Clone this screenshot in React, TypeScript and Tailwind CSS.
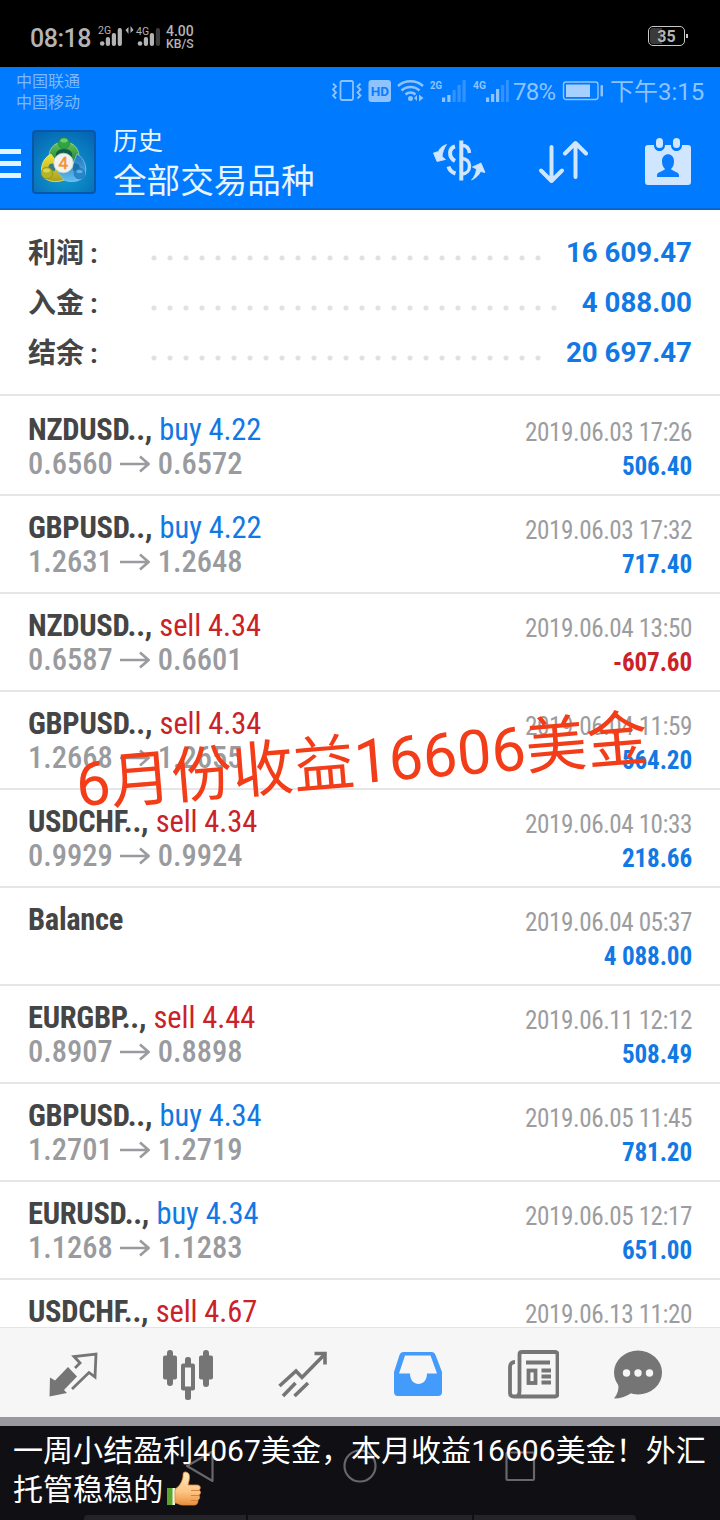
import React from 'react';

type Side = 'buy' | 'sell';

interface Deal {
  symbol: string;
  side?: Side;
  volume?: string;
  open?: string;
  close?: string;
  time: string;
  profit: string;
}

const SUMMARY = [
  { label: '利润', value: '16 609.47', dots: 'w-[400px]' },
  { label: '入金', value: '4 088.00', dots: 'w-[416px]' },
  { label: '结余', value: '20 697.47', dots: 'w-[400px]' },
];

const DEALS: Deal[] = [
  { symbol: 'NZDUSD..,', side: 'buy', volume: '4.22', open: '0.6560', close: '0.6572', time: '2019.06.03 17:26', profit: '506.40' },
  { symbol: 'GBPUSD..,', side: 'buy', volume: '4.22', open: '1.2631', close: '1.2648', time: '2019.06.03 17:32', profit: '717.40' },
  { symbol: 'NZDUSD..,', side: 'sell', volume: '4.34', open: '0.6587', close: '0.6601', time: '2019.06.04 13:50', profit: '-607.60' },
  { symbol: 'GBPUSD..,', side: 'sell', volume: '4.34', open: '1.2668', close: '1.2655', time: '2019.06.04 11:59', profit: '564.20' },
  { symbol: 'USDCHF..,', side: 'sell', volume: '4.34', open: '0.9929', close: '0.9924', time: '2019.06.04 10:33', profit: '218.66' },
  { symbol: 'Balance', time: '2019.06.04 05:37', profit: '4 088.00' },
  { symbol: 'EURGBP..,', side: 'sell', volume: '4.44', open: '0.8907', close: '0.8898', time: '2019.06.11 12:12', profit: '508.49' },
  { symbol: 'GBPUSD..,', side: 'buy', volume: '4.34', open: '1.2701', close: '1.2719', time: '2019.06.05 11:45', profit: '781.20' },
  { symbol: 'EURUSD..,', side: 'buy', volume: '4.34', open: '1.1268', close: '1.1283', time: '2019.06.05 12:17', profit: '651.00' },
  { symbol: 'USDCHF..,', side: 'sell', volume: '4.67', time: '2019.06.13 11:20', profit: '' },
];

const PhoneStatusBar = () => (
  <div className="h-[67px] shrink-0 bg-black text-[#b4b4b4] flex items-start pl-[30px] pr-[32px]">
    <span className="text-[25px] leading-none mt-[26px] w-[62px] whitespace-nowrap font-medium tracking-[-0.5px]">08:18</span>
    <svg width="66" height="24" viewBox="0 0 66 24" className="mt-[24px] ml-[5px]" fill="#b4b4b4">
      <text x="1" y="10" fontSize="10.5">2G</text>
      <circle cx="5.2" cy="19.5" r="2.3" />
      <rect x="8.8" y="13" width="4.2" height="9" rx="2" />
      <rect x="14.8" y="9" width="4.2" height="13" rx="2" />
      <rect x="20.7" y="4" width="4.2" height="18" rx="2" />
      <path d="M28.5 6l3-3v7zM36.5 6l-3-4v7z" />
      <text x="39" y="11" fontSize="10.5">4G</text>
      <circle cx="43" cy="19.5" r="2.3" />
      <rect x="46.8" y="13" width="4.2" height="9" rx="2" />
      <rect x="52.8" y="9" width="4.2" height="13" rx="2" />
      <rect x="58.8" y="4" width="4.2" height="18" rx="2" fill="#3c3c3c" />
    </svg>
    <div className="mt-[25px] ml-[3px] font-medium">
      <div className="text-[14px] leading-[13px]">4.00</div>
      <div className="text-[12.2px] leading-[12px]">KB/S</div>
    </div>
    <div className="ml-auto mt-[26px] flex items-center">
      <div className="relative w-[37px] h-[20px] rounded-[5px] border border-[#c8c8c8] flex items-center justify-center">
        <div className="absolute left-px top-px w-[12px] h-[16px] rounded-l-[3px] bg-[#3a3a3a]" />
        <span className="relative top-px text-[16px] leading-none font-bold">35</span>
      </div>
      <div className="w-[2px] h-[4px] ml-px bg-[#c8c8c8]" />
    </div>
  </div>
);

const CarrierBar = () => (
  <div className="h-[50px] flex items-start pl-[16px] pr-[14px] text-[#8fc3ff]">
    <div className="text-[16px] leading-[21px] mt-[4px] text-[#7db8fb]">
      <div>中国联通</div>
      <div>中国移动</div>
    </div>
    <svg width="178" height="30" viewBox="0 0 178 30" className="ml-auto mt-[9px]" fill="#8fc3ff">
      <g fill="none" stroke="#8fc3ff" strokeWidth="1.8">
        <rect x="9.5" y="5" width="12.5" height="19" rx="1.5" />
        <path d="M2 7.5l3 3-3 3 3 3-3 3 3 3M29.5 7.5l-3 3 3 3-3 3 3 3-3 3" />
      </g>
      <rect x="37.5" y="4" width="22.5" height="22" rx="3" />
      <text x="48.8" y="19.8" fontSize="13.5" fontWeight="bold" textAnchor="middle" fill="#0a7cff">HD</text>
      <g fill="none" stroke="#8fc3ff" strokeWidth="2.5">
        <path d="M67 10a19 19 0 0 1 25 0M70.5 14.5a13 13 0 0 1 18 0M74.5 18.5a7.5 7.5 0 0 1 10 0" />
      </g>
      <circle cx="79.5" cy="22.5" r="2.5" />
      <path d="M88 18.5l4.5 3.5-4.5 3.5zM86 19v6l-3-3z" />
      <text x="99" y="12.5" fontSize="11.5" fontWeight="bold" textLength="12" lengthAdjust="spacingAndGlyphs">2G</text>
      <rect x="111" y="21.5" width="3.2" height="4.5" />
      <rect x="116.3" y="19" width="3.2" height="7" />
      <g opacity="0.35">
        <rect x="121.5" y="14" width="3.2" height="12" />
        <rect x="126.5" y="9" width="3.2" height="17" />
        <rect x="131.5" y="4" width="3.2" height="22" />
      </g>
      <text x="142" y="12.5" fontSize="11.5" fontWeight="bold" textLength="13" lengthAdjust="spacingAndGlyphs">4G</text>
      <rect x="155" y="21.5" width="3.2" height="4.5" />
      <rect x="160" y="18" width="3.2" height="8" />
      <rect x="165" y="13" width="3.2" height="13" />
      <g opacity="0.35">
        <rect x="170" y="9" width="3.2" height="17" />
        <rect x="175" y="4" width="2.8" height="22" />
      </g>
    </svg>
    <span className="text-[24px] leading-none mt-[13px] ml-[4px] w-[46px] whitespace-nowrap tracking-[-0.7px]">78%</span>
    <svg width="42" height="22" viewBox="0 0 42 22" className="mt-[13px] ml-[3px]">
      <rect x="1.5" y="2" width="34.5" height="17.5" rx="2.5" fill="none" stroke="#8fc3ff" strokeWidth="1.4" />
      <rect x="4" y="4.5" width="24" height="12.5" fill="#a5d0ff" />
      <rect x="38.5" y="5" width="2.5" height="11.5" rx="1" fill="#8fc3ff" />
    </svg>
    <span className="text-[24px] leading-[30px] mt-[10px] ml-[6px] w-[96px] whitespace-nowrap">下午3:15</span>
  </div>
);

const AppLogo = () => (
  <svg width="64" height="64" viewBox="0 0 64 64">
    <defs>
      <radialGradient id="tile" cx="50%" cy="65%" r="75%">
        <stop offset="0" stopColor="#12a0d0" />
        <stop offset="1" stopColor="#0465b4" />
      </radialGradient>
      <linearGradient id="green" x1="0" y1="0" x2="0" y2="1">
        <stop offset="0" stopColor="#6cc455" />
        <stop offset="1" stopColor="#167f35" />
      </linearGradient>
      <linearGradient id="gold" x1="0" y1="0" x2="0" y2="1">
        <stop offset="0" stopColor="#f3e238" />
        <stop offset="1" stopColor="#a8a01c" />
      </linearGradient>
      <linearGradient id="blue" x1="0" y1="0" x2="0" y2="1">
        <stop offset="0" stopColor="#1d74b8" />
        <stop offset="1" stopColor="#63bdf0" />
      </linearGradient>
    </defs>
    <rect x="1" y="1" width="62" height="62" rx="3" fill="url(#tile)" stroke="#0857a8" strokeWidth="2" />
    <path d="M17 30C16 19 22 12 32 12s16 7 15 18l-8 3H25z" fill="url(#green)" stroke="#a4dd8c" strokeWidth="0.8" />
    <path d="M19 24C11 28 8 37 10 45c4 7 14 8 22 5l-2-10z" fill="url(#gold)" stroke="#efe77a" strokeWidth="0.8" />
    <path d="M45 24c8 5 10 13 8 21-4 7-14 8-21 5l-7-9 14-3z" fill="url(#blue)" stroke="#7fc8f2" strokeWidth="0.8" />
    <path d="M24 27c-1-5 2-8 8-8s9 3 8 8z" fill="#0b5f4c" />
    <path d="M18 34c-2 2-2 4-1 6l6 1v-8zM46 34c2 2 2 4 1 6l-6 1v-8z" fill="#0d6a9c" opacity="0.8" />
    <circle cx="32" cy="13" r="5.8" fill="#2ea446" stroke="#1c7c3c" strokeWidth="0.6" />
    <ellipse cx="32" cy="10.5" rx="3.5" ry="2" fill="#8fda80" opacity="0.7" />
    <circle cx="15" cy="43" r="5.8" fill="#b3b428" stroke="#80861c" strokeWidth="0.6" />
    <ellipse cx="14.5" cy="40.5" rx="3.5" ry="2" fill="#e9e46e" opacity="0.7" />
    <circle cx="47.5" cy="43.5" r="5.3" fill="#2685cc" stroke="#1a69a8" strokeWidth="0.6" />
    <ellipse cx="47.5" cy="41.5" rx="3" ry="1.5" fill="#8fd0f5" opacity="0.6" />
    <circle cx="31.5" cy="33" r="9.8" fill="#f3f1ec" stroke="#c4d4cc" strokeWidth="0.8" />
    <text x="31.3" y="39" fontSize="17" textAnchor="middle" fill="#f09433" stroke="#f09433" strokeWidth="0.5">4</text>
  </svg>
);

const TitleBar = () => (
  <div className="h-[93px] flex items-start border-b-2 border-[#0868cf]">
    <div className="mt-[32px] w-[21px] flex flex-col gap-[7px]">
      <div className="h-[5px] bg-[#e4f2ff]" />
      <div className="h-[5px] bg-[#e4f2ff]" />
      <div className="h-[5px] bg-[#e4f2ff]" />
    </div>
    <div className="mt-[13px] ml-[11px]">
      <AppLogo />
    </div>
    <div className="ml-[17px] text-[#e8f4ff] whitespace-nowrap">
      <div className="text-[25px] leading-[30px] mt-[10px]">历史</div>
      <div className="text-[33.6px] leading-[42px] mt-[4px]">全部交易品种</div>
    </div>
    <svg width="54" height="44" viewBox="0 0 54 44" className="ml-auto mt-[22px] mr-[51px]">
      <g fill="none" stroke="#d0e6ff" strokeWidth="4">
        <path d="M22 7.5C16 9 15 18 22 22M15.5 27.5c1 4 4 6 7 7" />
        <path d="M28.3 1.5v40" />
        <path d="M29 6.5c4 0 7 2 7.5 7.5M29 19.500c4 0 7.500 3 7.500 7.500s-3 8-7.500 8" strokeWidth="3.500" />
      </g>
      <path d="M13.500 5.500C9 7 6.500 9.500 5.500 12.500L0.500 14 4 22.500l8.500-2L9 17.500c.5-4.500 2-8.500 4.500-12zM38.500 41c4.500-2 7.500-5 9-8.500l4.500 1-4-9.500-8.500 4 4 2c-.5 4-2 8-5 11z" fill="#d0e6ff" stroke="#d0e6ff" strokeWidth="0.800" strokeLinejoin="round" />
    </svg>
    <svg width="50" height="44" viewBox="0 0 50 44" className="mt-[23px] mr-[56px]" fill="none" stroke="#d0e6ff" strokeWidth="4" strokeLinecap="round" strokeLinejoin="round">
      <path d="M13.500 7v34M3 30.500L13.500 41 24 30.500" />
      <path d="M37.500 37V3M27 13.500L37.500 3 48 13.500" />
    </svg>
    <svg width="48" height="50" viewBox="0 0 48 50" className="mr-[28px] mt-[20px]">
      <path d="M4 8h6c0 8 11 8 11 0h6c0 8 11 8 11 0h6q3 0 3 3v34q0 3-3 3H4q-3 0-3-3V11q0-3 3-3z" fill="#d0e6ff" />
      <rect x="12" y="1" width="7" height="10" rx="3.500" fill="#d0e6ff" />
      <rect x="29" y="1" width="7" height="10" rx="3.500" fill="#d0e6ff" />
      <path d="M13 40v-2c0-3 7-4 8-6-2-2-3-4-3-8 0-9 12-9 12 0 0 4-1 6-3 8 1 2 8 3 8 6v2z" fill="#0a7cff" />
    </svg>
  </div>
);

const Summary = () => (
  <div className="h-[186px] shrink-0 pt-[18px] px-[28px] border-b-2 border-[#e6e6e8]">
    {SUMMARY.map((row) => (
      <div key={row.label} className="h-[50px] flex items-center">
        <span className="w-[117.5px] mt-[2px] text-[28px] leading-none font-bold text-[#454545] whitespace-nowrap">
          {row.label}
          <span className="ml-[6px]">:</span>
        </span>
        <div className={`${row.dots} h-[6px] mt-[9px] bg-[radial-gradient(circle_at_center,#e0e0e0_0_2px,transparent_3px)] bg-[length:16px_6px] bg-repeat-x`} />
        <span className="ml-auto text-[27.7px] leading-none font-bold text-[#1279e4] whitespace-nowrap">{row.value}</span>
      </div>
    ))}
  </div>
);

const DealRow: React.FC<{ deal: Deal }> = ({ deal }) => (
  <div className="h-[98px] shrink-0 px-[28px] pt-[14px] flex justify-between border-b-2 border-[#e6e6e8] font-stretch-condensed">
    <div className="whitespace-nowrap">
      <div className="text-[30.5px] leading-[36px]">
        <span className="font-bold text-[#454545] tracking-[-0.3px]">{deal.symbol}</span>
        {deal.side && (
          <span className={`ml-[7.5px] tracking-[-0.1px] ${deal.side === 'buy' ? 'text-[#1279e4]' : 'text-[#cb2229]'}`}>
            {deal.side} {deal.volume}
          </span>
        )}
      </div>
      {deal.open && (
        <div className="flex items-center -mt-px text-[30.5px] leading-[34px] font-medium text-[#999b9e]">
          <span>{deal.open}</span>
          <svg width="30" height="18" viewBox="0 0 30 18" className="mx-[7.5px]" fill="none" stroke="#999b9e" strokeWidth="2.6">
            <path d="M0 9h28M20 1.5L28.5 9 20 16.5" />
          </svg>
          <span>{deal.close}</span>
        </div>
      )}
    </div>
    <div className="text-right whitespace-nowrap">
      <div className="mt-[3px] text-[25.2px] leading-[36px] tracking-[-0.45px] text-[#9b9da0]">{deal.time}</div>
      <div className={`text-[25.2px] leading-[32px] tracking-[-0.15px] font-bold ${deal.profit.startsWith('-') ? 'text-[#cb2229]' : 'text-[#1279e4]'}`}>{deal.profit}</div>
    </div>
  </div>
);

const TabBar = () => (
  <div className="h-[90px] shrink-0 bg-[#f6f6f6] border-t border-[#e4e4e4] flex items-start pt-[21px] pl-[48px]">
    <svg width="52" height="50" viewBox="0 0 52 50" className="mr-[62px]">
      <path d="M20 18l9 9.5L16 41l3 3L1.5 47.5 2 28.5l5 3z" fill="#757575" />
      <path d="M27 19l5-5-6-6.5L48 5l-1 23-6-4.5L24 40" fill="none" stroke="#757575" strokeWidth="2.8" />
    </svg>
    <svg width="52" height="52" viewBox="0 0 52 52" className="mr-[64px]" fill="#757575">
      <rect x="5" y="1" width="6" height="36" rx="3" />
      <rect x="1" y="6.5" width="14" height="24" rx="2" />
      <rect x="41" y="1" width="6" height="37" rx="3" />
      <rect x="37" y="6.5" width="14" height="24" rx="2" />
      <rect x="23" y="8" width="6" height="43" rx="2.5" />
      <rect x="19" y="14.5" width="14" height="27" rx="2" />
      <rect x="23" y="18.5" width="6" height="19" fill="#f6f6f6" />
    </svg>
    <svg width="50" height="50" viewBox="0 0 50 50" className="mr-[65px]" fill="none" stroke="#757575" strokeWidth="3.6">
      <path d="M1.5 37L18 22l6 6.5L46 6" />
      <path d="M36.5 4.5h10.5v11" />
      <path d="M5 47l12.5-13M16.5 47L30 34" />
    </svg>
    <svg width="50" height="50" viewBox="0 0 50 50" className="mr-[64px]">
      <path d="M10.5 3h28q3 0 4 3L49 23v20q0 4-4 4H5q-4 0-4-4V23L6.5 6q1-3 4-3z" fill="#439bfb" />
      <path d="M12 6.5h25.5L44 24.5H34c0 14-17 14-17 0H6z" fill="#f6f6f6" />
    </svg>
    <svg width="52" height="50" viewBox="0 0 52 50" className="mr-[54px]" fill="none" stroke="#757575" strokeWidth="3.8">
      <path d="M8 13q-5 0-5 5v26q0 3.5 4 3.5h41q2.5 0 2.5-2.5V5.5q0-2.500-2.500-2.500H15q-2.500 0-2.500 2.500V42q0 5-3.500 5.500" />
      <path d="M19 13.5h24M34.5 21.5H44M34.5 27.5H44M34.5 33.5H44" />
      <rect x="21.5" y="21.5" width="7" height="12.5" />
    </svg>
    <svg width="50" height="50" viewBox="0 0 50 50">
      <ellipse cx="25" cy="23.5" rx="24" ry="22" fill="#757575" />
      <path d="M5 34q2 8-4 15.5 10 0 18-6z" fill="#757575" />
      <circle cx="13.5" cy="24" r="3.7" fill="#f6f6f6" />
      <circle cx="25" cy="24" r="3.7" fill="#f6f6f6" />
      <circle cx="36.5" cy="24" r="3.7" fill="#f6f6f6" />
    </svg>
  </div>
);

const ThumbsUp = () => (
  <svg width="34" height="36" viewBox="0 0 34 36" className="inline-block align-top mt-[1px] ml-[4px]">
    <defs>
      <linearGradient id="skin" x1="0" y1="0" x2="0" y2="1">
        <stop offset="0" stopColor="#ffe9bd" />
        <stop offset="0.6" stopColor="#fdc584" />
        <stop offset="1" stopColor="#ea8e3c" />
      </linearGradient>
    </defs>
    <rect x="0" y="17" width="6" height="17" fill="#5aa62c" />
    <rect x="5.5" y="17" width="2.5" height="17" fill="#eef7e8" />
    <path d="M8 18c4-2 7-7 8-12 0-3 0-5 2-5 5 0 5 5 4 9l-1 4h9c4 0 4 4 2 5 2 1 2 4 0 5 1 2 1 4-1 5 0 3-1 5-4 5H16c-4 0-5-2-8-2z" fill="url(#skin)" stroke="#e08a3a" strokeWidth="0.8" />
    <path d="M24 19.5h8M24 24.5h8M24 29.5h6.5" stroke="#d9803a" strokeWidth="1.2" />
  </svg>
);

const Caption = () => (
  <div className="relative h-[94px] shrink-0 bg-[#0f0f14] overflow-hidden">
    <svg width="720" height="94" viewBox="0 0 720 94" className="absolute left-0 top-0" fill="none" stroke="#66666b" strokeWidth="2.2" strokeLinejoin="round">
      <path d="M187 40L212.5 25.5V55z" />
      <circle cx="360" cy="40" r="15.5" />
      <rect x="506.5" y="26.5" width="27.5" height="27.5" rx="1" />
    </svg>
    <div className="relative pl-[13px] pt-[5px] text-[30.05px] leading-[39px] text-white whitespace-nowrap">
      <div>一周小结盈利4067美金，本月收益16606美金！外汇</div>
      <div className="h-[39px]">
        托管稳稳的
        <ThumbsUp />
      </div>
    </div>
    <div className="absolute bottom-0 left-[84px] flex gap-[2px]">
      <div className="w-[162px] h-[5px] rounded-tl bg-[#232328]" />
      <div className="w-[224px] h-[5px] bg-[#232328]" />
      <div className="w-[162px] h-[5px] rounded-tr bg-[#232328]" />
    </div>
  </div>
);

export default function App() {
  return (
    <div className="relative w-[720px] h-[1520px] overflow-hidden flex flex-col bg-white font-['Roboto','Noto_Sans_CJK_SC',sans-serif]">
      <PhoneStatusBar />
      <header className="h-[143px] shrink-0 bg-[#007aff]">
        <CarrierBar />
        <TitleBar />
      </header>
      <Summary />
      <main className="h-[931px] shrink-0 overflow-hidden flex flex-col pt-[2px]">
        {DEALS.map((deal) => (
          <DealRow key={deal.time} deal={deal} />
        ))}
      </main>
      <TabBar />
      <div className="h-[9px] shrink-0 bg-[#98989e]" />
      <Caption />
      <div className="absolute left-[75px] top-[727px] w-[570px] text-center text-[61.2px] leading-[70px] text-[#f33c18] whitespace-nowrap -rotate-[4.7deg]">
        6月份收益16606美金
      </div>
    </div>
  );
}
